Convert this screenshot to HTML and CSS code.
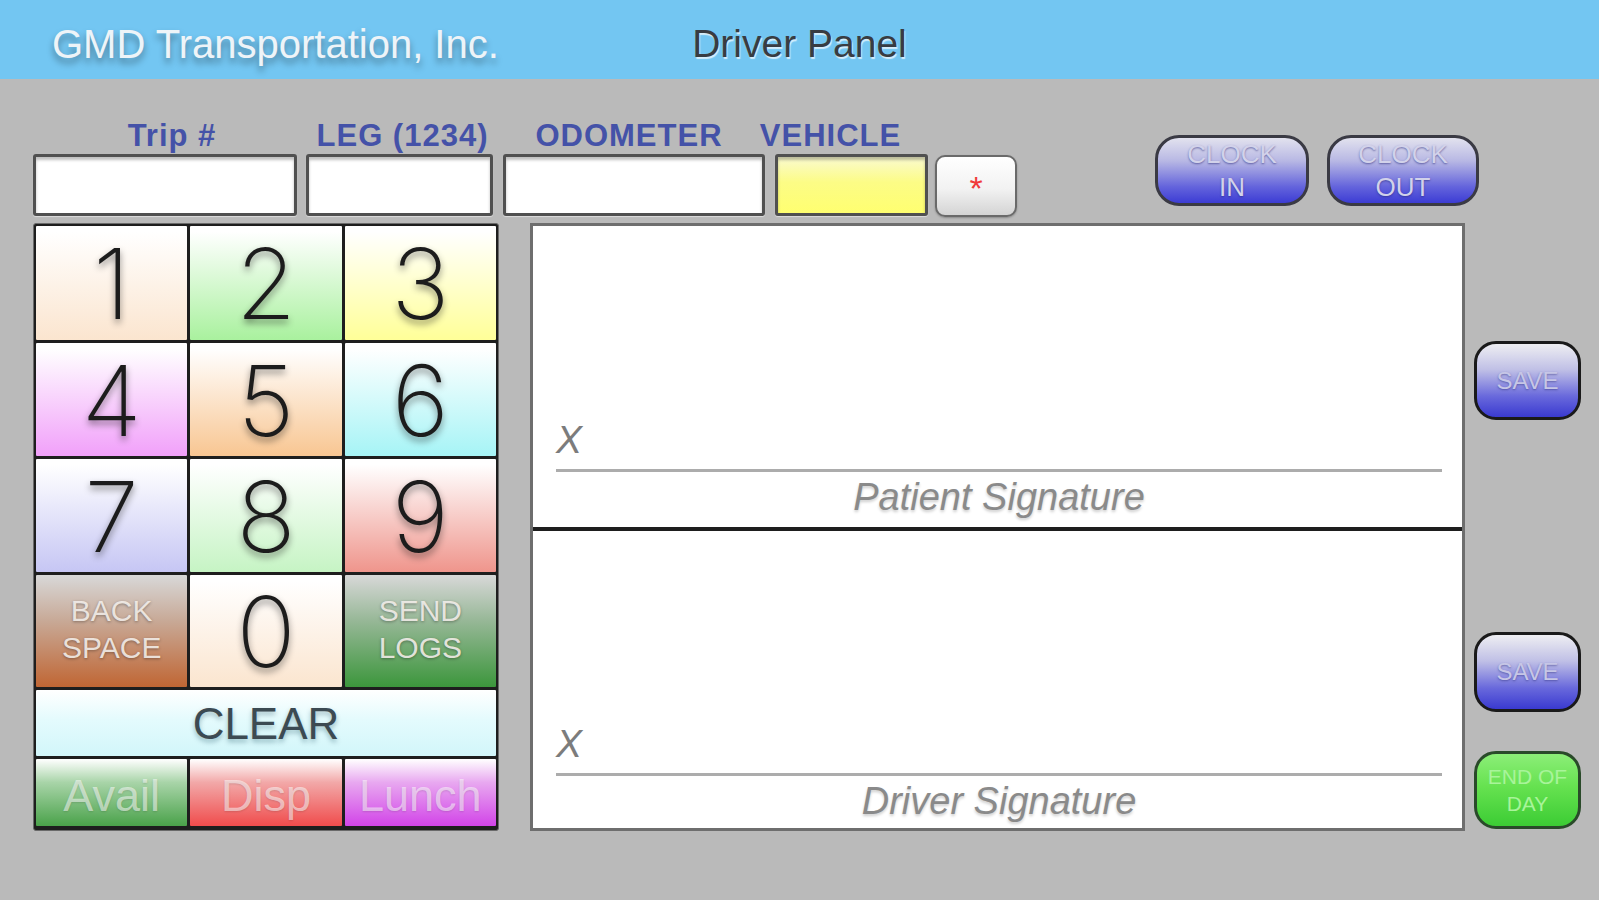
FILE: index.html
```html
<!DOCTYPE html>
<html lang="en">
<head>
<meta charset="utf-8">
<title>Driver Panel</title>
<link rel="stylesheet" href="styles.css">
</head>
<body>
<header class="header">
  <div class="brand">GMD Transportation, Inc.</div>
  <div class="title">Driver Panel</div>
  <div class="spacer"></div>
</header>
<main class="main">
  <section class="top-row">
    <div class="field field-trip">
      <div class="field-label"><span class="lbl lbl-trip">Trip #</span></div>
      <div class="box"></div>
    </div>
    <div class="field field-leg">
      <div class="field-label"><span class="lbl lbl-leg">LEG (1234)</span></div>
      <div class="box"></div>
    </div>
    <div class="field field-odo">
      <div class="field-label"><span class="lbl lbl-odo">ODOMETER</span></div>
      <div class="box"></div>
    </div>
    <div class="field field-veh">
      <div class="field-label"><span class="lbl lbl-veh">VEHICLE</span></div>
      <div class="box box-yellow"></div>
    </div>
    <button class="star">*</button>
    <div class="clock-group">
      <button class="pill pill-in">CLOCK<br>IN</button>
      <button class="pill pill-out">CLOCK<br>OUT</button>
    </div>
  </section>

  <section class="work-row">
    <div class="keypad">
      <button class="key digit k1">1</button>
      <button class="key digit k2">2</button>
      <button class="key digit k3">3</button>
      <button class="key digit k4">4</button>
      <button class="key digit k5">5</button>
      <button class="key digit k6">6</button>
      <button class="key digit k7">7</button>
      <button class="key digit k8">8</button>
      <button class="key digit k9">9</button>
      <button class="key kback">BACK<br>SPACE</button>
      <button class="key digit k0">0</button>
      <button class="key ksend">SEND<br>LOGS</button>
      <button class="key kclear">CLEAR</button>
      <button class="key kstat kavail">Avail</button>
      <button class="key kstat kdisp">Disp</button>
      <button class="key kstat klunch">Lunch</button>
    </div>

    <div class="sig">
      <div class="sig-pane">
        <div class="sig-x">X</div>
        <div class="sig-line"></div>
        <div class="sig-label">Patient Signature</div>
      </div>
      <div class="sig-pane sig-pane-bottom">
        <div class="sig-x">X</div>
        <div class="sig-line"></div>
        <div class="sig-label">Driver Signature</div>
      </div>
    </div>

    <div class="side">
      <button class="rbtn save save-1">SAVE</button>
      <button class="rbtn save save-2">SAVE</button>
      <button class="rbtn eod">END OF<br>DAY</button>
    </div>
  </section>
</main>
</body>
</html>
```

FILE: styles.css
```css
* { box-sizing: border-box; }

html, body {
  margin: 0;
  padding: 0;
}

body {
  width: 1599px;
  height: 900px;
  overflow: hidden;
  background: #bababa;
  font-family: "Liberation Sans", Arial, sans-serif;
}

button {
  font-family: inherit;
  margin: 0;
  padding: 0;
  cursor: pointer;
}

/* ---------- header ---------- */
.header {
  height: 79px;
  background: #73c6f2;
  display: grid;
  grid-template-columns: 1fr auto 1fr;
  align-items: start;
  padding-top: 21px;
}

.brand {
  padding-left: 52px;
  font-size: 40px;
  line-height: 46px;
  color: #eef4f8;
  white-space: nowrap;
  text-shadow: 0 5px 7px rgba(0, 0, 0, 0.4);
}

.title {
  font-size: 39px;
  line-height: 46px;
  color: #383c42;
  white-space: nowrap;
  text-shadow: 1px 2px 1px rgba(255, 255, 255, 0.7);
}

/* ---------- main ---------- */
.main {
  padding: 37px 0 0 33px;
}

.top-row {
  display: flex;
  align-items: flex-start;
  height: 101px;
}

.field {
  display: flex;
  flex-direction: column;
}

.field-trip { width: 264px; }
.field-leg  { width: 187px; margin-left: 9px; }
.field-odo  { width: 262px; margin-left: 10px; }
.field-veh  { width: 153px; margin-left: 10px; }

.field-label {
  height: 38px;
  display: flex;
  justify-content: center;
  white-space: nowrap;
}

.lbl {
  font-size: 31px;
  line-height: 39px;
  font-weight: bold;
  letter-spacing: 1px;
  color: #3444a6;
  opacity: 0.88;
}

.lbl-trip { margin-left: 14px; }
.lbl-leg  { margin-left: 6px; }
.lbl-odo  { margin-right: 10px; }
.lbl-veh  { margin-right: 42px; }

.box {
  height: 62px;
  background: #fff;
  border: 3px solid #505050;
  border-radius: 3px;
  box-shadow: inset 0 3px 3px rgba(0, 0, 0, 0.25), 0 1px 1px rgba(255,255,255,0.5);
}

.box-yellow {
  background: linear-gradient(to bottom, #fafad0 0%, #fcfc86 45%, #ffff70 100%);
}

.star {
  margin-top: 39px;
  margin-left: 7px;
  width: 82px;
  height: 62px;
  border: 2px solid #6a6a6a;
  border-radius: 10px;
  background: linear-gradient(to bottom, #ffffff 0%, #f2f2f2 55%, #d4d4d4 100%);
  color: #f03a3a;
  font-size: 34px;
  line-height: 40px;
  padding-top: 4px;
  box-shadow: 0 1px 2px rgba(0,0,0,0.25);
}

.clock-group {
  display: flex;
  gap: 18px;
  margin-left: 138px;
  margin-top: 19px;
}

.pill {
  height: 71px;
  border: 3px solid #3a3a44;
  border-radius: 24px;
  background: linear-gradient(to bottom, #e2e2ee 0%, #b8b8e4 35%, #6464dc 75%, #3c3cd4 100%);
  color: #d2d2ea;
  font-size: 26px;
  line-height: 33px;
  text-shadow: 0 1px 2px rgba(40, 40, 120, 0.6);
  padding-top: 0;
}

.pill-in  { width: 154px; }
.pill-out { width: 152px; }

/* ---------- work row ---------- */
.work-row {
  display: flex;
  margin-top: 6px;
  height: 607px;
}

.keypad {
  width: 466px;
  height: 608px;
  background: #1e1e1e;
  border: 1px solid #6a6a6a;
  border-radius: 3px;
  padding: 2px;
  display: grid;
  grid-template-columns: repeat(3, 1fr);
  grid-template-rows: 114px 113px 113px 112px 66px 67px;
  gap: 3px;
}

.key {
  border: none;
  border-radius: 1px;
  display: flex;
  align-items: center;
  justify-content: center;
}

.digit {
  font-family: "Inter", "Roboto", "Liberation Sans", sans-serif;
  font-weight: 200;
  font-size: 98px;
  line-height: 112px;
  color: #1c1c1c;
  text-shadow: 0 4px 7px rgba(0, 0, 0, 0.45);
  padding-top: 2px;
}

.k1 { background: linear-gradient(to bottom, #ffffff 5%, #fbe5cf 100%); }
.k2 { background: linear-gradient(to bottom, #ffffff 5%, #a9f19e 100%); }
.k3 { background: linear-gradient(to bottom, #ffffff 5%, #ffff98 100%); }
.k4 { background: linear-gradient(to bottom, #ffffff 5%, #f1a0fa 100%); }
.k5 { background: linear-gradient(to bottom, #ffffff 5%, #f8c692 100%); }
.k6 { background: linear-gradient(to bottom, #ffffff 5%, #a6f4f6 100%); }
.k7 { background: linear-gradient(to bottom, #ffffff 5%, #c6c6f4 100%); }
.k8 { background: linear-gradient(to bottom, #ffffff 5%, #c6f4c4 100%); }
.k9 { background: linear-gradient(to bottom, #ffffff 5%, #ef958c 100%); }
.k0 { background: linear-gradient(to bottom, #ffffff 5%, #fbe5cf 100%); }

.kback, .ksend {
  font-size: 30px;
  line-height: 37px;
  color: rgba(245, 240, 236, 0.88);
  text-shadow: 0 1px 3px rgba(0, 0, 0, 0.35);
  padding-bottom: 4px;
}

.kback { background: linear-gradient(to bottom, #d8d8d8 0%, #c8aa98 40%, #c06634 100%); }
.ksend { background: linear-gradient(to bottom, #d8d8d8 0%, #98b898 40%, #3c963c 100%); }

.kclear {
  grid-column: 1 / span 3;
  background: linear-gradient(to bottom, #ffffff 0%, #e4fbfd 45%, #d2f6fa 100%);
  font-size: 44px;
  line-height: 60px;
  color: #3c4a52;
  text-shadow: 0 3px 5px rgba(0, 60, 80, 0.35);
  padding-top: 2px;
}

.kstat {
  font-size: 45px;
  line-height: 52px;
  color: rgba(255, 255, 255, 0.55);
  align-items: flex-end;
  padding-bottom: 4px;
  text-shadow: 0 1px 2px rgba(0,0,0,0.12);
}

.kavail { background: linear-gradient(to bottom, #ffffff 0%, #a8d4a8 35%, #4aa24a 100%); }
.kdisp  { background: linear-gradient(to bottom, #ffffff 0%, #f2a8a8 35%, #f04c4c 100%); }
.klunch { background: linear-gradient(to bottom, #ffffff 0%, #e8a8f0 35%, #d244e8 100%); }

/* ---------- signatures ---------- */
.sig {
  width: 935px;
  margin-left: 31px;
  height: 608px;
  background: #fff;
  border: 3px solid #6e6e6e;
  display: flex;
  flex-direction: column;
}

.sig-pane {
  flex: 1;
  display: flex;
  flex-direction: column;
  justify-content: flex-end;
  padding: 0 20px 8px 23px;
}

.sig-pane-bottom {
  border-top: 4px solid #1e1e1e;
  padding-bottom: 5px;
}

.sig-x {
  font-size: 39px;
  line-height: 40px;
  font-style: italic;
  color: #7c7c7c;
  margin-bottom: 9px;
}

.sig-line {
  height: 3px;
  background: #acacac;
  margin-bottom: 3px;
}

.sig-label {
  font-size: 38px;
  line-height: 44px;
  font-style: italic;
  text-align: center;
  color: #8a8a8a;
  text-shadow: 0 2px 3px rgba(0, 0, 0, 0.2);
}

/* ---------- side buttons ---------- */
.side {
  width: 107px;
  margin-left: 9px;
  display: flex;
  flex-direction: column;
}

.rbtn {
  width: 107px;
  border: 3px solid #1a1a1a;
  border-radius: 22px;
  font-size: 24px;
  line-height: 28px;
}

.save {
  height: 79px;
  background: linear-gradient(to bottom, #eeeef2 0%, #c0c0e6 35%, #6868dc 72%, #3a3ad0 100%);
  color: #c6c6e6;
  text-shadow: 0 1px 2px rgba(40, 40, 120, 0.5);
}

.save-1 { margin-top: 118px; }
.save-2 { margin-top: 212px; height: 80px; }

.eod {
  margin-top: 39px;
  height: 78px;
  border-color: #2a4a2a;
  background: linear-gradient(to bottom, #8cee78 0%, #66e250 45%, #3ccc34 100%);
  color: #a8f49a;
  font-size: 21px;
  line-height: 27px;
}
```
